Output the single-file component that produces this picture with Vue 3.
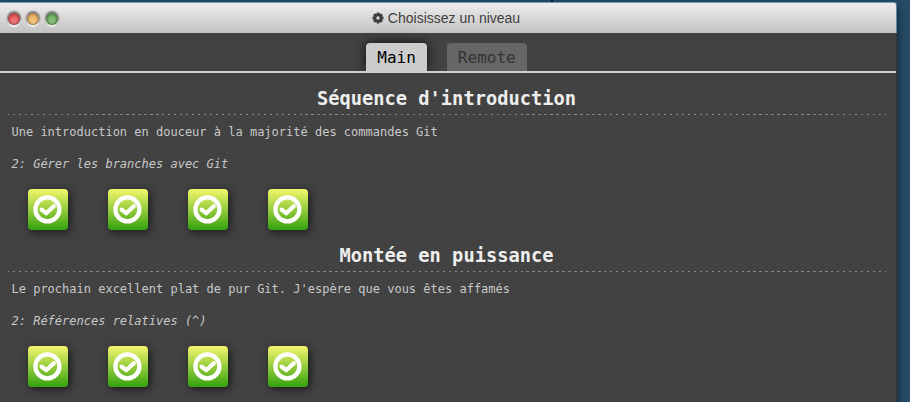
<script setup>
const tabs = [
  { label: 'Main', active: true },
  { label: 'Remote', active: false },
]

const sequences = [
  {
    title: "Séquence d'introduction",
    about: 'Une introduction en douceur à la majorité des commandes Git',
    current: '2: Gérer les branches avec Git',
    levels: 4,
  },
  {
    title: 'Montée en puissance',
    about: "Le prochain excellent plat de pur Git. J'espère que vous êtes affamés",
    current: '2: Références relatives (^)',
    levels: 4,
  },
]

const lights = ['red', 'amber', 'green']
</script>

<template>
  <div class="desktop">
    <i class="notch"></i>
    <section class="window">
      <header class="titlebar">
        <div class="lights">
          <i v-for="c in lights" :key="c" class="light" :class="c"></i>
        </div>
        <svg class="gear" viewBox="0 0 24 24">
          <g fill="#3c3c3c">
            <rect v-for="a in [0, 45, 90, 135]" :key="a" x="9.2" y="1" width="5.6" height="22" rx="0.8" :transform="`rotate(${a} 12 12)`" />
            <circle cx="12" cy="12" r="8.8" />
          </g>
          <circle cx="12" cy="12" r="3.3" fill="#dcdcdc" />
        </svg>
        <span>Choisissez un niveau</span>
      </header>
      <nav class="tabs">
        <div v-for="t in tabs" :key="t.label" class="tab" :class="{ active: t.active }">{{ t.label }}</div>
      </nav>
      <main class="content">
        <article v-for="s in sequences" :key="s.title" class="sequence">
          <h3>{{ s.title }}</h3>
          <div class="rule"></div>
          <p class="about">{{ s.about }}</p>
          <p class="current">{{ s.current }}</p>
          <div class="levels">
            <div v-for="n in s.levels" :key="n" class="level">
              <svg viewBox="0 0 40 41">
                <circle cx="19.4" cy="20.4" r="12" fill="none" stroke="#fff" stroke-width="4.3" />
                <path d="M13.6 20.6 L18.2 24.2 L25.8 17.2" fill="none" stroke="#fff" stroke-width="4.2" stroke-linecap="round" stroke-linejoin="round" />
              </svg>
            </div>
          </div>
        </article>
      </main>
    </section>
  </div>
</template>

<style>
body {
  margin: 0;
  overflow: hidden;
}
</style>

<style scoped>
.desktop {
  position: relative;
  box-sizing: border-box;
  width: 910px;
  height: 402px;
  padding-top: 2px;
  overflow: hidden;
  background: #254b66;
}
.notch {
  position: absolute;
  left: 551px;
  top: 0;
  width: 2px;
  height: 2px;
  background: #151515;
}
.window {
  width: 896px;
  height: 400px;
  background: #424242;
  border-radius: 0 4px 0 0;
  box-shadow: 1px 0 0 #353535, 1px 6px 10px rgba(0, 0, 0, 0.6);
}
.titlebar {
  position: relative;
  box-sizing: border-box;
  width: 897px;
  height: 31px;
  display: flex;
  align-items: center;
  justify-content: center;
  padding-right: 4px;
  border-top: 1px solid #6f9cbf;
  border-right: 1px solid #5f87a5;
  border-radius: 0 3px 0 0;
  background: linear-gradient(#efeded, #c2c2c2);
  color: #404040;
  font: 14px/30px "Liberation Sans", Arial, sans-serif;
}
.lights {
  position: absolute;
  left: 8px;
  top: 10px;
  display: flex;
  gap: 7px;
}
.light {
  width: 12px;
  height: 12px;
  border-radius: 50%;
  box-shadow: 0 -1px 1.5px 1px rgba(0, 0, 0, 0.45), 0 1.5px 0 0.5px rgba(255, 255, 255, 0.85), inset 0 0 2px 1px rgba(0, 0, 0, 0.35);
}
.red { background: radial-gradient(circle at 50% 75%, #f28080, #d33b3b); }
.amber { background: radial-gradient(circle at 50% 75%, #f8cd8a, #d99b4c); }
.green { background: radial-gradient(circle at 50% 75%, #8fc980, #519542); }
.gear {
  width: 12px;
  height: 12px;
  margin-right: 4px;
}
.tabs {
  box-sizing: border-box;
  height: 40px;
  display: flex;
  align-items: flex-end;
  justify-content: center;
  gap: 20px;
  padding-right: 3px;
  border-bottom: 2px solid #d0cece;
}
.tab {
  box-sizing: border-box;
  height: 28px;
  padding: 0 11px;
  border-radius: 4px 4px 0 0;
  background: #666;
  color: #333;
  font: 16px/29px "DejaVu Sans Mono", monospace;
}
.tab.active {
  background: #ccc;
  color: #000;
  box-shadow: 0 0 12px rgba(0, 0, 0, 0.8);
  clip-path: inset(-14px -14px 0 -14px);
}
.content {
  padding: 14px 10px 0 8px;
  color: #c8c8c8;
  font: 12px/16px "DejaVu Sans Mono", monospace;
}
.sequence {
  height: 157px;
}
h3 {
  margin: 0;
  height: 27px;
  padding-right: 1px;
  color: #eee;
  font-size: 18.72px;
  line-height: 23px;
  text-align: center;
}
.rule {
  height: 1px;
  background: repeating-linear-gradient(90deg, #888 0 1.2px, transparent 1.2px 4.8px, #888 4.8px 5.973px);
}
p {
  margin: 0 0 0 3.5px;
}
.about {
  padding-top: 9px;
}
.current {
  padding-top: 16px;
  font-style: italic;
}
.levels {
  display: flex;
  gap: 40px;
  padding: 17px 0 0 20px;
}
.level {
  width: 40px;
  height: 41px;
  border-radius: 4px;
  background: linear-gradient(#f5f76c, #35a20f);
  box-shadow: 2px 2px 8px rgba(0, 0, 0, 0.65);
}
.level svg {
  display: block;
  width: 40px;
  height: 41px;
}
</style>
